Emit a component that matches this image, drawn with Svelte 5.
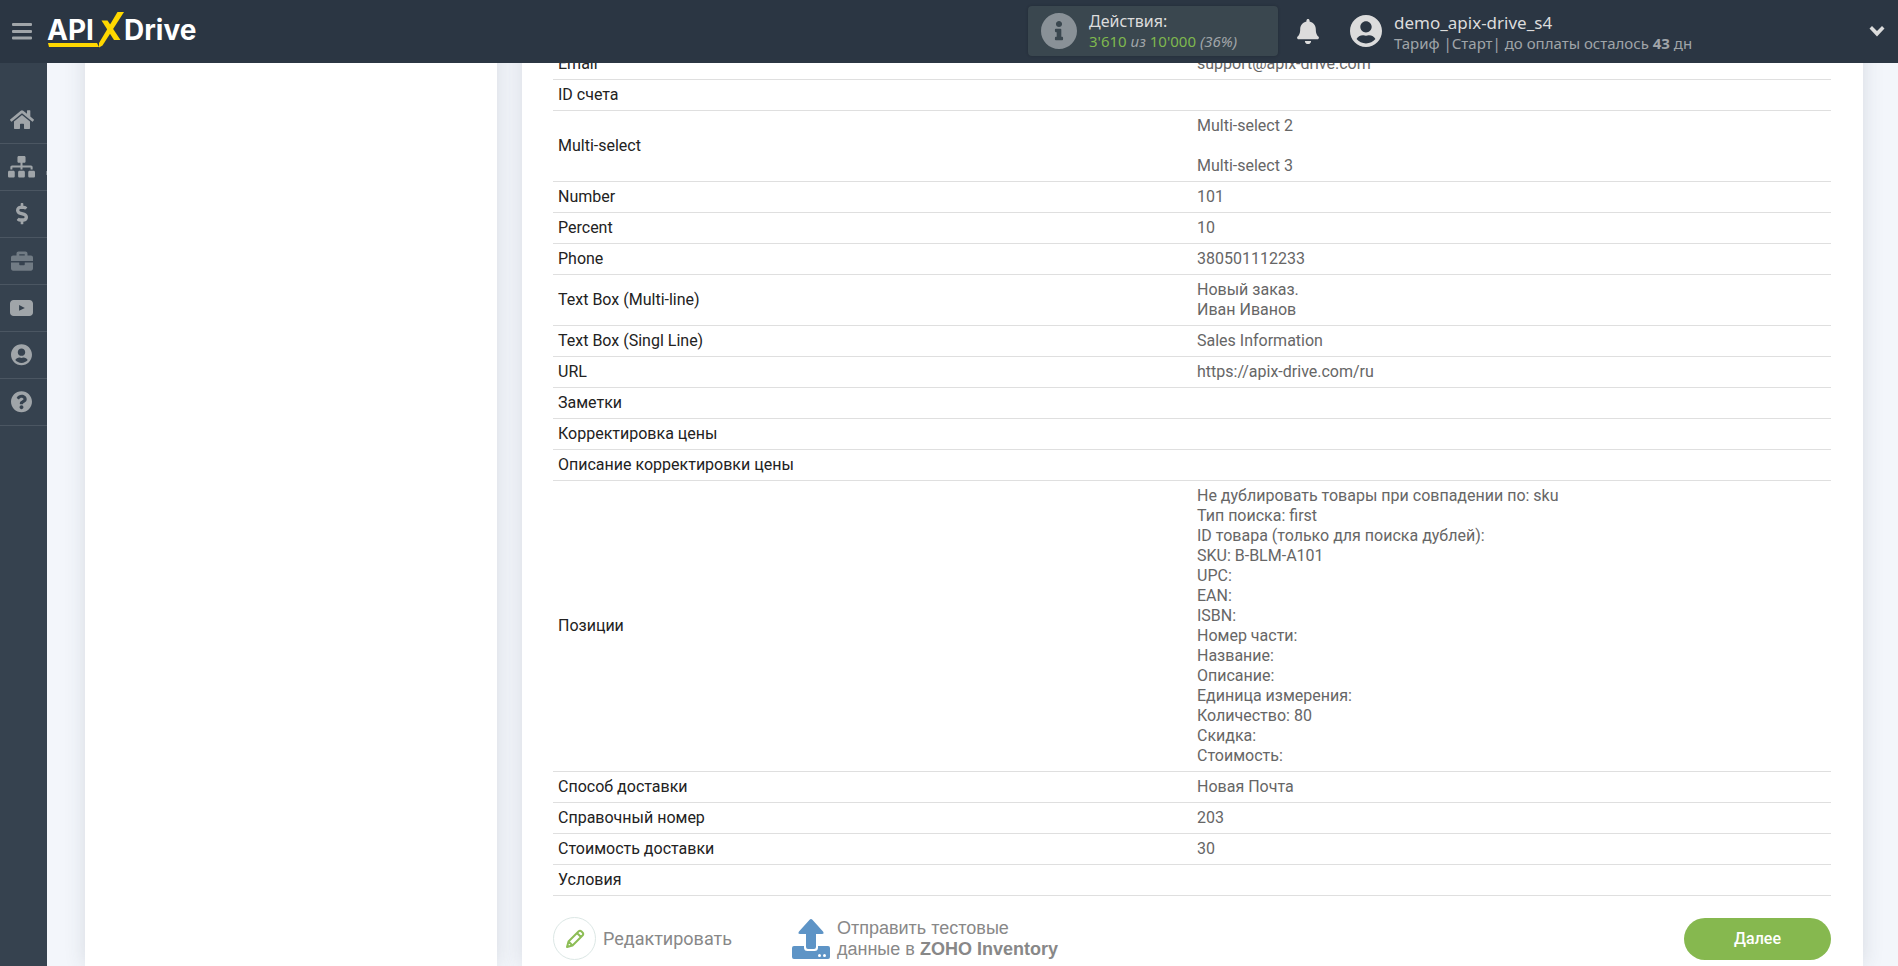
<script lang="ts">
	interface Field {
		label: string;
		lines?: string[];
	}

	interface NavItem {
		label: string;
		viewBox: string;
		width: number;
		path: string;
		muted?: boolean;
		submenu?: boolean;
	}

	const userCircle =
		'M248 8C111 8 0 119 0 256s111 248 248 248 248-111 248-248S385 8 248 8zm0 96c48.6 0 88 39.4 88 88s-39.4 88-88 88-88-39.4-88-88 39.4-88 88-88zm0 344c-58.7 0-111.3-26.6-146.5-68.2 18.8-35.4 55.6-59.8 98.5-59.8 2.4 0 4.8.4 7.1 1.1 13 4.2 26.6 6.9 40.9 6.9 14.3 0 28-2.7 40.9-6.9 2.3-.7 4.7-1.1 7.1-1.1 42.9 0 79.7 24.4 98.5 59.8C359.3 421.4 306.7 448 248 448z';

	const navItems: NavItem[] = [
		{
			label: 'Главная',
			viewBox: '0 0 576 512',
			width: 24,
			path: 'M280.37 148.26L96 300.11V464a16 16 0 0 0 16 16l112.06-.29a16 16 0 0 0 15.92-16V368a16 16 0 0 1 16-16h64a16 16 0 0 1 16 16v95.64a16 16 0 0 0 16 16.05L464 480a16 16 0 0 0 16-16V300L295.67 148.26a12.19 12.19 0 0 0-15.3 0zM571.6 251.47L488 182.56V44.05a12 12 0 0 0-12-12h-56a12 12 0 0 0-12 12v72.61L318.47 43a48 48 0 0 0-61 0L4.34 251.47a12 12 0 0 0-1.6 16.9l25.5 31A12 12 0 0 0 45.15 301l235.22-193.74a12.19 12.19 0 0 1 15.3 0L530.9 301a12 12 0 0 0 16.9-1.6l25.5-31a12 12 0 0 0-1.7-16.93z'
		},
		{
			label: 'Связи',
			viewBox: '0 0 640 512',
			width: 27,
			submenu: true,
			path: 'M128 352H32c-17.67 0-32 14.33-32 32v96c0 17.67 14.33 32 32 32h96c17.67 0 32-14.33 32-32v-96c0-17.67-14.33-32-32-32zm-24-80h192v48h48v-48h192v48h48v-57.59c0-21.17-17.23-38.41-38.41-38.41H344v-64h40c17.67 0 32-14.33 32-32V32c0-17.67-14.33-32-32-32H256c-17.67 0-32 14.33-32 32v96c0 17.67 14.33 32 32 32h40v64H94.41C73.23 224 56 241.23 56 262.41V320h48v-48zm264 80h-96c-17.67 0-32 14.33-32 32v96c0 17.67 14.33 32 32 32h96c17.67 0 32-14.33 32-32v-96c0-17.67-14.33-32-32-32zm240 0h-96c-17.67 0-32 14.33-32 32v96c0 17.67 14.33 32 32 32h96c17.67 0 32-14.33 32-32v-96c0-17.67-14.33-32-32-32z'
		},
		{
			label: 'Оплата',
			viewBox: '0 0 288 512',
			width: 12,
			path: 'M209.2 233.4l-108-31.6C88.7 198.2 80 186.5 80 173.5c0-16.3 13.2-29.5 29.5-29.5h66.3c12.2 0 24.2 3.7 34.2 10.5 6.1 4.1 14.3 3.1 19.5-2l34.8-34c7.1-6.9 6.1-18.4-1.8-24.5C238 74.8 207.4 64.1 176 64V16c0-8.8-7.2-16-16-16h-32c-8.8 0-16 7.2-16 16v48h-2.5C45.8 64-5.4 118.7.5 183.6c4.2 46.1 39.4 83.6 83.8 96.6l102.5 30c12.5 3.7 21.2 15.3 21.2 28.3 0 16.3-13.2 29.5-29.5 29.5h-66.3C100 368 88 364.3 78 357.5c-6.1-4.1-14.3-3.1-19.5 2l-34.8 34c-7.1 6.9-6.1 18.4 1.8 24.5 24.5 19.2 55.1 29.9 86.5 30v48c0 8.8 7.2 16 16 16h32c8.8 0 16-7.2 16-16v-48.2c46.6-.9 90.3-28.6 105.7-72.7 21.5-61.6-14.6-124.8-72.5-141.7z'
		},
		{
			label: 'Проекты',
			viewBox: '0 0 512 512',
			width: 22,
			muted: true,
			path: 'M320 336c0 8.84-7.16 16-16 16h-96c-8.84 0-16-7.16-16-16v-48H0v144c0 25.6 22.4 48 48 48h416c25.6 0 48-22.4 48-48V288H320v48zm144-208h-80V80c0-25.6-22.4-48-48-48H176c-25.6 0-48 22.4-48 48v48H48c-25.6 0-48 22.4-48 48v80h512v-80c0-25.6-22.4-48-48-48zm-144 0H192V96h128v32z'
		},
		{
			label: 'Видео',
			viewBox: '0 0 576 400',
			width: 23,
			path: 'M90 0h396c50 0 90 40 90 90v220c0 50-40 90-90 90H90c-50 0-90-40-90-90V90C0 40 40 0 90 0zm138 128v144l144-72z'
		},
		{ label: 'Профиль', viewBox: '0 0 496 512', width: 21, path: userCircle },
		{
			label: 'Помощь',
			viewBox: '8 0 496 512',
			width: 21,
			path: 'M504 256c0 136.997-111.043 248-248 248S8 392.997 8 256C8 119.083 119.043 8 256 8s248 111.083 248 248zM262.655 90c-54.497 0-89.255 22.957-116.549 63.758-3.536 5.286-2.353 12.415 2.715 16.258l34.699 26.31c5.205 3.947 12.621 3.008 16.665-2.122 17.864-22.658 30.113-35.797 57.303-35.797 20.429 0 45.698 13.148 45.698 32.958 0 14.976-12.363 22.667-32.534 33.976C247.128 238.528 216 254.941 216 296v4c0 6.627 5.373 12 12 12h56c6.627 0 12-5.373 12-12v-1.333c0-28.462 83.186-29.647 83.186-106.667 0-58.002-60.165-102-116.531-102zM256 338c-25.365 0-46 20.635-46 46 0 25.364 20.635 46 46 46s46-20.636 46-46c0-25.365-20.635-46-46-46z'
		}
	];

	const fields: Field[] = [
		{ label: 'Email', lines: ['support@apix-drive.com'] },
		{ label: 'ID счета' },
		{ label: 'Multi-select', lines: ['Multi-select 2', '', 'Multi-select 3'] },
		{ label: 'Number', lines: ['101'] },
		{ label: 'Percent', lines: ['10'] },
		{ label: 'Phone', lines: ['380501112233'] },
		{ label: 'Text Box (Multi-line)', lines: ['Новый заказ.', 'Иван Иванов'] },
		{ label: 'Text Box (Singl Line)', lines: ['Sales Information'] },
		{ label: 'URL', lines: ['https://apix-drive.com/ru'] },
		{ label: 'Заметки' },
		{ label: 'Корректировка цены' },
		{ label: 'Описание корректировки цены' },
		{
			label: 'Позиции',
			lines: [
				'Не дублировать товары при совпадении по: sku',
				'Тип поиска: first',
				'ID товара (только для поиска дублей):',
				'SKU: B-BLM-A101',
				'UPC:',
				'EAN:',
				'ISBN:',
				'Номер части:',
				'Название:',
				'Описание:',
				'Единица измерения:',
				'Количество: 80',
				'Скидка:',
				'Стоимость:'
			]
		},
		{ label: 'Способ доставки', lines: ['Новая Почта'] },
		{ label: 'Справочный номер', lines: ['203'] },
		{ label: 'Стоимость доставки', lines: ['30'] },
		{ label: 'Условия' }
	];
</script>

<header class="topbar">
	<button class="icon-button menu" aria-label="Меню">
		<svg viewBox="0 0 20 17" width="20" height="17">
			<path d="M1 0h18q1 0 1 1v1q0 1-1 1H1q-1 0-1-1V1q0-1 1-1zm0 7h18q1 0 1 1v1q0 1-1 1H1q-1 0-1-1V8q0-1 1-1zm0 6.500h18q1 0 1 1v1q0 1-1 1H1q-1 0-1-1v-1q0-1 1-1z" />
		</svg>
	</button>
	<a class="logo" href="#home" aria-label="APIXDrive">
		<svg viewBox="0 0 154 39" width="154" height="39">
			<text x="0" y="28">API</text>
			<text x="77" y="28">Drive</text>
			<path d="M1 31h49l2 4H2z" />
			<path d="M54.500 8.500h6l13 19.500h-6.500z" />
			<path d="M70.500 0H77L55.500 33.500 52 35.500V31z" />
		</svg>
	</a>

	<div class="usage">
		<svg class="usage-icon" viewBox="8 8 496 496" width="36" height="36">
			<path d="M256 8C119.043 8 8 119.083 8 256c0 136.997 111.043 248 248 248s248-111.003 248-248C504 119.083 392.957 8 256 8zm0 110c23.196 0 42 18.804 42 42s-18.804 42-42 42-42-18.804-42-42 18.804-42 42-42zm56 254c0 6.627-5.373 12-12 12h-88c-6.627 0-12-5.373-12-12v-24c0-6.627 5.373-12 12-12h12v-64h-12c-6.627 0-12-5.373-12-12v-24c0-6.627 5.373-12 12-12h64c6.627 0 12 5.373 12 12v100h12c6.627 0 12 5.373 12 12v24z" />
		</svg>
		<div>
			<div class="usage-title">Действия:</div>
			<div class="usage-count"><b>3'610</b> <i>из</i> <b>10'000</b> <i>(36%)</i></div>
		</div>
	</div>

	<button class="icon-button bell" aria-label="Уведомления">
		<svg viewBox="0 0 448 512" width="22" height="25">
			<path d="M224 512c35.32 0 63.97-28.65 63.97-64H160.03c0 35.35 28.65 64 63.97 64zm215.39-149.71c-19.32-20.76-55.47-51.99-55.47-154.29 0-77.7-54.48-139.9-127.94-155.16V32c0-17.67-14.32-32-31.98-32s-31.98 14.33-31.98 32v20.84C118.56 68.1 64.08 130.3 64.08 208c0 102.3-36.15 133.53-55.47 154.29-6 6.45-8.66 14.16-8.61 21.71.11 16.4 12.98 32 32.1 32h383.8c19.12 0 32-15.6 32.1-32 .05-7.55-2.61-15.27-8.61-21.71z" />
		</svg>
	</button>

	<div class="account">
		<svg viewBox="0 8 496 496" width="32" height="32"><path d={userCircle} /></svg>
		<div>
			<div class="account-name">demo_apix-drive_s4</div>
			<div class="account-plan">Тариф |Старт| до оплаты осталось <b>43</b> дн</div>
		</div>
	</div>

	<button class="icon-button expand" aria-label="Развернуть">
		<svg viewBox="0 0 16 12" width="16" height="12">
			<path d="M0.500 3.500L3 1l5 5 5-5 2.500 2.500L8 11.500z" />
		</svg>
	</button>
</header>

<nav class="sidebar">
	{#each navItems as item (item.label)}
		<a href="#menu" class:muted={item.muted} class:submenu={item.submenu} aria-label={item.label}>
			<svg viewBox={item.viewBox} width={item.width}><path d={item.path} /></svg>
		</a>
	{/each}
</nav>

<main class="page">
	<aside class="card"></aside>
	<section class="card details">
		<table>
			<tbody>
				{#each fields as field (field.label)}
					<tr>
						<th scope="row">{field.label}</th>
						<td>{(field.lines ?? []).join('\n')}</td>
					</tr>
				{/each}
			</tbody>
		</table>
		<div class="actions">
			<button class="action edit">
				<span class="round">
					<svg viewBox="0 0 20 20" width="20" height="20">
						<path d="M2 18l1.500-5.500L13.500 2.500q1.500-1.500 3 0l1 1q1.500 1.500 0 3L7.500 16.500zM3.500 12.500l4 4M12 4l4 4" />
					</svg>
				</span>
				Редактировать
			</button>
			<button class="action send">
				<svg viewBox="0 0 38 40" width="38" height="40">
					<path d="M19 0q.8 0 1.400.7L31 12.500q1.500 2.500-1 2.500h-6v13q0 2-2 2h-6q-2 0-2-2V15H8q-2.500 0-1-2.500L17.600.7Q18.200 0 19 0z" />
					<path d="M2 27h10v1.500q0 3.500 3.500 3.500h7q3.500 0 3.500-3.500V27h10q2 0 2 2v9q0 2-2 2H2q-2 0-2-2v-9q0-2 2-2z" />
					<circle cx="27.500" cy="36.500" r="1.500" />
					<circle cx="32.500" cy="36.500" r="1.500" />
				</svg>
				<span>Отправить тестовые<br />данные в <b>ZOHO Inventory</b></span>
			</button>
			<button class="next">Далее</button>
		</div>
	</section>
</main>

<style>
	:global(body) {
		margin: 0;
		background: #f3f6fb;
		font-family: Roboto, sans-serif;
		font-size: 16px;
		line-height: 20px;
	}

	svg {
		display: block;
		flex: none;
	}

	button {
		padding: 0;
		border: 0;
		background: none;
		font-family: inherit;
		cursor: pointer;
	}

	.topbar {
		position: fixed;
		z-index: 2;
		top: 0;
		left: 0;
		right: 0;
		height: 63px;
		box-sizing: border-box;
		padding: 0 13px 1px 12px;
		display: flex;
		align-items: center;
		background: #2b3643;
		color: #dcdcdc;
		font-family: 'Noto Sans', sans-serif;
	}

	.icon-button svg {
		fill: #dcdcdc;
	}

	.menu svg {
		fill: #a0a5a9;
	}

	.logo {
		margin-left: 15px;
	}

	.logo text {
		font-family: Inter, sans-serif;
		font-size: 28px;
		font-weight: 700;
		fill: #fff;
	}

	.logo path {
		fill: #ffd800;
	}

	.usage {
		width: 250px;
		height: 50px;
		box-sizing: border-box;
		margin-left: auto;
		padding-left: 13px;
		display: flex;
		align-items: center;
		gap: 12px;
		border-radius: 4px;
		background: #3a474f;
		box-shadow: 0 0 3px rgba(0, 0, 0, 0.2);
	}

	.usage-icon {
		fill: #899197;
	}

	.usage-count {
		color: #a0a5a9;
		font-size: 15px;
	}

	.usage-count b {
		color: #7fb84e;
		font-weight: 400;
	}

	.bell {
		margin-left: 19px;
	}

	.account {
		width: 519px;
		margin-left: 31px;
		display: flex;
		align-items: center;
		gap: 12px;
	}

	.account svg {
		fill: #dcdcdc;
	}

	.account-name {
		padding-top: 3px;
		font-size: 17px;
	}

	.account-plan {
		color: #a0a5a9;
		font-size: 15px;
	}

	.sidebar {
		position: fixed;
		z-index: 1;
		top: 63px;
		bottom: 0;
		left: 0;
		width: 47px;
		padding-top: 34px;
		box-sizing: border-box;
		background: #36424f;
	}

	.sidebar a {
		position: relative;
		height: 46px;
		padding-right: 4px;
		display: flex;
		align-items: center;
		justify-content: center;
		border-bottom: 1px solid #4b5662;
	}

	.sidebar svg {
		fill: #a0a5a9;
	}

	.sidebar .muted svg {
		fill: #717b84;
	}

	.submenu::after {
		content: '';
		position: absolute;
		right: 0;
		top: 27px;
		width: 1px;
		height: 4px;
		background: #717b84;
	}

	.page {
		min-height: 100vh;
		box-sizing: border-box;
		padding: 0 35px 0 85px;
		display: grid;
		grid-template-columns: 412fr 1341fr;
		gap: 25px;
	}

	.card {
		background: #fff;
		box-shadow: 0 0 20px rgba(50, 60, 70, 0.14);
	}

	.details {
		padding: 49px 32px 5px 31px;
	}

	table {
		width: 100%;
		table-layout: fixed;
		border-collapse: collapse;
	}

	th,
	td {
		padding: 5px;
		border-bottom: 1px solid #dfdfdf;
		text-align: left;
		vertical-align: middle;
	}

	th {
		color: #222;
		font-weight: 400;
	}

	td {
		color: #666;
		white-space: pre-line;
	}

	.actions {
		margin-top: 21px;
		display: flex;
		align-items: center;
	}

	.action {
		display: flex;
		align-items: center;
		gap: 7px;
		color: #888;
		font-size: 18px;
		line-height: 21px;
		text-align: left;
	}

	.round {
		width: 43px;
		height: 43px;
		box-sizing: border-box;
		display: grid;
		place-items: center;
		border: 1px solid #dce7e5;
		border-radius: 50%;
	}

	.round path {
		fill: none;
		stroke: #8dbd56;
		stroke-width: 2;
		stroke-linejoin: round;
	}

	.send {
		margin-left: 60px;
		font-family: 'Liberation Sans', Arial, sans-serif;
	}

	.send path {
		fill: #5e94c6;
	}

	.send circle {
		fill: #fff;
	}

	.next {
		width: 147px;
		height: 42px;
		margin-left: auto;
		border-radius: 21px;
		background: #86b84f;
		color: #fff;
		font-size: 16px;
		font-weight: 500;
	}
</style>
